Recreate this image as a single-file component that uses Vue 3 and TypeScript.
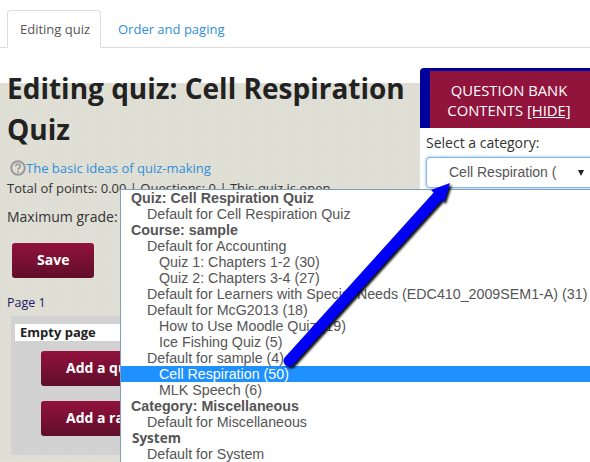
<script setup lang="ts">
interface Row { text: string; kind: 'group' | 'opt' | 'sub' | 'sys'; active?: boolean }
const rows: Row[] = [
  { text: 'Quiz: Cell Respiration Quiz', kind: 'group' },
  { text: 'Default for Cell Respiration Quiz', kind: 'opt' },
  { text: 'Course: sample', kind: 'group' },
  { text: 'Default for Accounting', kind: 'opt' },
  { text: 'Quiz 1: Chapters 1-2 (30)', kind: 'sub' },
  { text: 'Quiz 2: Chapters 3-4 (27)', kind: 'sub' },
  { text: 'Default for Learners with Special Needs (EDC410_2009SEM1-A) (31)', kind: 'opt' },
  { text: 'Default for McG2013 (18)', kind: 'opt' },
  { text: 'How to Use Moodle Quiz (19)', kind: 'sub' },
  { text: 'Ice Fishing Quiz (5)', kind: 'sub' },
  { text: 'Default for sample (4)', kind: 'opt' },
  { text: 'Cell Respiration (50)', kind: 'sub', active: true },
  { text: 'MLK Speech (6)', kind: 'sub' },
  { text: 'Category: Miscellaneous', kind: 'group' },
  { text: 'Default for Miscellaneous', kind: 'opt' },
  { text: 'System', kind: 'sys' },
  { text: 'Default for System', kind: 'opt' },
]
</script>

<template>
  <div class="page">
    <nav class="tabs">
      <a class="tab current">Editing quiz</a>
      <a class="tab">Order and paging</a>
    </nav>
    <div class="columns">
      <main class="left">
        <h1>Editing quiz: Cell Respiration Quiz</h1>
        <p class="help">
          <svg class="q" width="16" height="16" viewBox="0 0 16 16">
            <circle cx="8" cy="8" r="6.8" fill="none" stroke="#999" stroke-width="2" />
            <path d="M5.8 6.3a2.2 2.2 0 1 1 3.4 1.8c-.8.5-1.2.9-1.2 1.7" fill="none" stroke="#999" stroke-width="1.7" />
            <rect x="7.1" y="10.8" width="1.8" height="1.8" fill="#999" />
          </svg><a>The basic ideas of quiz-making</a>
        </p>
        <p class="stats">Total of points: 0.00 | Questions: 0 | This quiz is open</p>
        <p class="grade">Maximum grade:</p>
        <button class="btn save">Save</button>
        <p class="pagelabel">Page 1</p>
        <section class="pagebox">
          <div class="empty">Empty page</div>
          <button class="btn add">Add a question</button>
          <button class="btn add">Add a random question</button>
        </section>
      </main>
      <aside class="right">
        <div class="bank">QUESTION BANK CONTENTS <u>[HIDE]</u></div>
        <label class="sel-label">Select a category:</label>
        <div class="select">
          <span>Cell Respiration (</span>
          <i class="caret"></i>
        </div>
      </aside>
    </div>

    <ul class="dropdown">
      <li v-for="r in rows" :key="r.text" :class="[r.kind, { active: r.active }]">{{ r.text }}</li>
    </ul>

    <svg class="arrow" width="590" height="462" viewBox="0 0 590 462">
      <defs>
        <filter id="sh" x="-20%" y="-20%" width="140%" height="140%">
          <feDropShadow dx="2" dy="2" stdDeviation="1.2" flood-color="#000" flood-opacity="0.95" />
        </filter>
      </defs>
      <g filter="url(#sh)">
        <path d="M289 361 L438 196" stroke="#0000f5" stroke-width="11" stroke-linecap="round" fill="none" />
        <path d="M450 183 L431 190 L444 202 Z" fill="#0000f5" />
      </g>
    </svg>
  </div>
</template>

<style>
html, body { margin: 0; background: #fff; }
</style>

<style scoped>
.page {
  position: relative;
  width: 590px;
  height: 462px;
  overflow: hidden;
  background: #fff;
  font-family: "Open Sans", sans-serif;
  color: #333;
}
.tabs {
  display: flex;
  height: 47px;
  padding-left: 7px;
  border-bottom: 1px solid #ddd;
}
.tab {
  height: 37px;
  padding: 9px 12px 0;
  margin-top: 10px;
  box-sizing: border-box;
  font-size: 13px;
  line-height: 19px;
  white-space: nowrap;
  color: #2f8fd8;
  border: 1px solid transparent;
}
.tab + .tab { padding-left: 16px; }
.tab.current {
  width: 94px;
  height: 38px;
  color: #555;
  background: #fff;
  border: 1px solid #ddd;
  border-bottom-color: #fff;
  border-radius: 4px 4px 0 0;
}
.columns {
  display: grid;
  grid-template-columns: 420px 170px;
  height: 414px;
}
.left {
  padding: 20px 7px 0;
  box-sizing: border-box;
  background-color: #e0dfd6;
  background-image:
    linear-gradient(#fff 35px, transparent 35px),
    repeating-linear-gradient(0deg, rgba(255, 255, 255, 0.05) 0 1px, transparent 1px 3px),
    repeating-linear-gradient(90deg, rgba(120, 120, 100, 0.03) 0 1px, transparent 1px 3px);
  min-width: 0;
}
h1 {
  margin: 0;
  font-size: 28px;
  line-height: 41px;
  font-weight: 700;
  color: #222;
}
.help {
  margin: 8px 0 0;
  padding-left: 3px;
  display: flex;
  align-items: center;
  font-size: 13px;
  line-height: 20px;
  color: #2f8fd8;
}
.stats {
  margin: 0;
  font-size: 13px;
  line-height: 20px;
  white-space: nowrap;
  color: #333;
}
.grade {
  margin: 9px 0 0;
  font-size: 14px;
  line-height: 20px;
}
.btn {
  display: block;
  height: 35px;
  border: 0;
  border-radius: 3px;
  background: linear-gradient(#92123c, #5f0e2b);
  color: #fff;
  font-family: inherit;
  font-size: 14px;
  font-weight: 700;
  white-space: nowrap;
  text-align: left;
}
.save {
  width: 82px;
  margin: 16px 0 0 5px;
  padding: 0 0 2px 25px;
}
.pagelabel {
  margin: 15px 0 0;
  font-size: 12.5px;
  line-height: 20px;
  color: #1a1a6a;
}
.pagebox {
  margin: 3px 0 0 4px;
  padding: 8px 4px 0;
  height: 139px;
  background: #d2d2d2;
  box-sizing: border-box;
}
.empty {
  width: 120px;
  height: 17px;
  padding-left: 5px;
  background: #fff;
  font-size: 13px;
  font-weight: 700;
  line-height: 17px;
  color: #222;
}
.add {
  width: 170px;
  margin: 10px 0 0 26px;
  padding: 0 0 2px 25px;
}
.add + .add { margin-top: 15px; }
.right { min-width: 0; }
.bank {
  margin-top: 20px;
  height: 60px;
  box-sizing: border-box;
  border-top: 3px solid #00009a;
  border-left: 10px solid #00009a;
  border-radius: 4px 0 0 0;
  padding: 9px 2px 0 0;
  background: #91143c;
  color: #fff;
  font-size: 14.8px;
  line-height: 20px;
  text-align: center;
}
.sel-label {
  display: block;
  padding: 5px 0 0 6px;
  font-size: 14px;
  line-height: 20px;
  color: #333;
}
.select {
  position: relative;
  margin: 4px 0 0 6px;
  width: 180px;
  height: 31px;
  box-sizing: border-box;
  padding-left: 22px;
  border: 1px solid #8db4e4;
  border-radius: 4px;
  box-shadow: 0 0 3px #66afe9;
  background: #fff;
  font-family: "Liberation Sans", sans-serif;
  font-size: 14px;
  line-height: 29px;
  color: #555;
}
.caret {
  position: absolute;
  left: 151px;
  top: 12px;
  border: 3.5px solid transparent;
  border-top: 6px solid #222;
  border-bottom: 0;
}
.dropdown {
  position: absolute;
  left: 120px;
  top: 189px;
  width: 480px;
  height: 280px;
  margin: 0;
  padding: 0;
  box-sizing: border-box;
  list-style: none;
  background: #fff;
  border: 1px solid #7f9db9;
  font-family: "Liberation Sans", sans-serif;
  font-size: 14.25px;
  line-height: 16px;
  color: #555;
  white-space: nowrap;
}
.dropdown li { height: 16px; }
.group { padding-left: 10px; font-weight: 700; }
.sys { padding-left: 11px; font-family: "Open Sans", sans-serif; font-weight: 700; font-size: 13.5px; }
.opt { padding-left: 26px; }
.sub { padding-left: 38px; }
.active { background: #1e90ff; color: #fff; }
.arrow {
  position: absolute;
  left: 0;
  top: 0;
  pointer-events: none;
}
</style>
